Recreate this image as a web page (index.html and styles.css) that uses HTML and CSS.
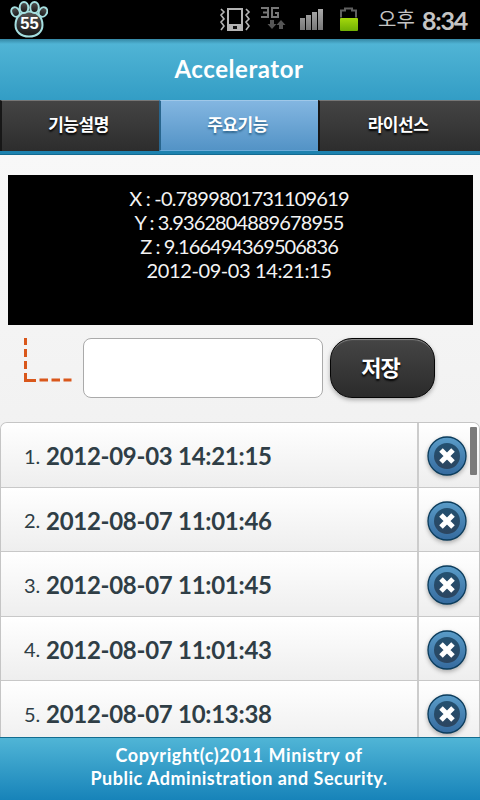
FILE: index.html
```html
<!DOCTYPE html>
<html lang="ko">
<head>
<meta charset="utf-8">
<title>Accelerator</title>
<link rel="stylesheet" href="styles.css">
</head>
<body>
<svg class="defs" width="0" height="0">
  <defs>
    <linearGradient id="disc" x1="0" y1="0" x2="0" y2="1"><stop offset="0" stop-color="#5a9cc8"/><stop offset="1" stop-color="#356a9e"/></linearGradient>
    <linearGradient id="core" x1="0" y1="0" x2="0" y2="1"><stop offset="0" stop-color="#235070"/><stop offset="1" stop-color="#2c4560"/></linearGradient>
    <linearGradient id="bars" x1="0" y1="0" x2="0" y2="1"><stop offset="0" stop-color="#aaa"/><stop offset="1" stop-color="#777"/></linearGradient>
    <linearGradient id="charge" x1="0" y1="0" x2="0" y2="1"><stop offset="0" stop-color="#a4d80c"/><stop offset="1" stop-color="#6fae04"/></linearGradient>
    <linearGradient id="pad" x1="0" y1="0" x2="0" y2="1"><stop offset="0" stop-color="#555"/><stop offset="1" stop-color="#151515"/></linearGradient>
    <g id="delete">
      <circle cx="20" cy="20" r="19" fill="url(#disc)" stroke="#0b3c5c" stroke-width="1.3"/>
      <circle cx="20" cy="20" r="13" fill="url(#core)"/>
      <path d="M14 14L26 26M26 14L14 26" stroke="#fff" stroke-width="5"/>
    </g>
  </defs>
</svg>
<div class="status">
  <svg class="paw" width="40" height="39" viewBox="0 0 40 39">
    <g fill="url(#pad)" stroke="#a5dfe0" stroke-width="2">
      <path d="M21 11.500C29 11.500 34.500 17 34.500 25C34.500 32 29 36.500 21 36.500C13 36.500 7.500 32 7.500 25C7.500 17 13 11.500 21 11.500Z"/>
      <ellipse cx="7.500" cy="12" rx="4" ry="5" transform="rotate(-28 7.500 12)"/>
      <ellipse cx="16" cy="7.500" rx="4.300" ry="5.500"/>
      <ellipse cx="26.500" cy="7.500" rx="4.300" ry="5.500"/>
      <ellipse cx="35" cy="12" rx="4" ry="5" transform="rotate(28 35 12)"/>
    </g>
    <text x="21.5" y="29" text-anchor="middle" class="count">55</text>
  </svg>
  <svg class="icons" width="142" height="39" viewBox="218 0 142 39">
    <g fill="none" stroke="#b4b4b4">
      <path d="M221 9l3 3-3 3 3 4-3 3 3 4-3 4M246 9l3 3-3 3 3 4-3 3 3 4-3 4" stroke-width="1.600"/>
      <rect x="228" y="9" width="14" height="21" stroke-width="2"/>
    </g>
    <path d="M228 24h14v6h-14z" fill="#b4b4b4"/>
    <path d="M233 26h4v3h-4z" fill="#111"/>
    <path d="M261 8h7v9h-7M263 12.500h5M279 8h-7v9h6v-4h-3" fill="none" stroke="#777" stroke-width="2"/>
    <path d="M270 20h4v4h2.500l-4.500 5-4.500-5h2.500zM279 29h4v-4h2.500l-4.500-5-4.500 5h2.500z" fill="#555"/>
    <path d="M300 18h5v12h-5zM306 15h5v15h-5zM312 12h5v18h-5zM318 9h5v21h-5z" fill="url(#bars)"/>
    <path d="M341 17.500v-7h4v-2h7v2h4v7" fill="none" stroke="#606060" stroke-width="2"/>
    <rect x="340" y="18" width="18" height="13" rx="1" fill="url(#charge)"/>
  </svg>
  <span class="ampm">오후</span><span class="clock">8:34</span>
</div>
<header class="title"><h1>Accelerator</h1></header>
<nav class="tabs">
  <a class="tab"><span>기능설명</span></a>
  <a class="tab active"><span>주요기능</span></a>
  <a class="tab"><span>라이선스</span></a>
</nav>
<main>
  <section class="readout">
    <p class="x">X : -0.7899801731109619</p>
    <p class="y">Y : 3.9362804889678955</p>
    <p class="z">Z : 9.166494369506836</p>
    <p class="date">2012-09-03 14:21:15</p>
  </section>
  <form class="entry">
    <svg class="elbow" width="83" height="60" viewBox="0 338 83 60"><path d="M25.500 337v8M25.500 349v8M25.500 361v8M25.500 373v7.500h10.500M39.500 380h8.500M51.500 380h8.500M63.500 380h8" fill="none" stroke="#d9571b" stroke-width="3"/></svg>
    <input class="field" type="text" aria-label="이름">
    <button class="save" type="button"><span>저장</span></button>
  </form>
  <ol class="list">
    <li><div class="entry-text"><span class="num">1.</span><b>2012-09-03 14:21:15</b></div><div class="action"><svg class="del" viewBox="0 0 40 40"><use href="#delete"/></svg></div></li>
    <li><div class="entry-text"><span class="num">2.</span><b>2012-08-07 11:01:46</b></div><div class="action"><svg class="del" viewBox="0 0 40 40"><use href="#delete"/></svg></div></li>
    <li><div class="entry-text"><span class="num">3.</span><b>2012-08-07 11:01:45</b></div><div class="action"><svg class="del" viewBox="0 0 40 40"><use href="#delete"/></svg></div></li>
    <li><div class="entry-text"><span class="num">4.</span><b>2012-08-07 11:01:43</b></div><div class="action"><svg class="del" viewBox="0 0 40 40"><use href="#delete"/></svg></div></li>
    <li><div class="entry-text"><span class="num">5.</span><b>2012-08-07 10:13:38</b></div><div class="action"><svg class="del" viewBox="0 0 40 40"><use href="#delete"/></svg></div></li>
  </ol>
</main>
<footer>
  <p class="f1">Copyright(c)2011 Ministry of</p>
  <p class="f2">Public Administration and Security.</p>
</footer>
</body>
</html>
```
FILE: styles.css
```css
* { box-sizing: border-box; }
body {
  margin: 0;
  width: 480px;
  height: 800px;
  overflow: hidden;
  display: flex;
  flex-direction: column;
  background: #f4f4f4;
  font-family: Lato, "Noto Sans CJK KR", sans-serif;
  font-variant-ligatures: none;
}
p, h1, ol { margin: 0; padding: 0; }
.defs { position: absolute; }

.status {
  height: 39px;
  flex: none;
  display: flex;
  align-items: center;
  background: #000;
  color: #c4c4c4;
  padding-left: 8px;
  white-space: nowrap;
}
.count { font: bold 16.5px "Liberation Sans", sans-serif; fill: #fff; }
.icons { margin-left: 170px; }
.ampm { width: 44px; margin-left: 18px; font-size: 20px; line-height: 39px; }
.clock { font-size: 25px; line-height: 38px; font-weight: bold; letter-spacing: -1.2px; }

.title {
  height: 61px;
  flex: none;
  background: linear-gradient(#3487a4 0, #50b4d5 5px, #339dc5 100%);
  color: #fff;
  text-align: center;
}
.title h1 { font-size: 24px; line-height: 59px; font-weight: bold; letter-spacing: .55px; padding-right: 2px; }

.tabs {
  height: 55px;
  flex: none;
  display: grid;
  grid-template-columns: 159px 159px 162px;
  background: #1d82af;
  border-bottom: 1px solid #146b91;
  padding-bottom: 3px;
}
.tab {
  background: linear-gradient(#444, #2d2d2d);
  border-top: 1px solid #777;
  border-left: 2px solid #171717;
  color: #fff;
  font-size: 17px;
  font-weight: bold;
  line-height: 47px;
  text-align: center;
  letter-spacing: -.5px;
  padding-right: 4px;
  text-shadow: 0 2px 2px #000;
}
.tab.active {
  background: linear-gradient(#83b6e1, #5393c6);
  border-top-color: #a0c8e9;
  border-left-color: #28658d;
  border-bottom: 1px solid #6cabd9;
  text-shadow: 0 2px 2px #31678f;
}

main { height: 582px; flex: none; display: flex; flex-direction: column; background: linear-gradient(#f8f8f8, #f1f1f1 300px); }
.readout {
  height: 150px;
  flex: none;
  margin: 20px 7px 0 8px;
  padding: 11px 3px 0 0;
  background: #000;
  color: #f3f3f3;
  text-align: center;
  font-size: 20px;
  line-height: 24px;
}
.x { letter-spacing: -.78px; }
.y { letter-spacing: -.9px; }
.z { letter-spacing: -.95px; }
.date { letter-spacing: -.4px; }

.entry { display: flex; height: 60px; flex: none; margin: 13px 0 24px; }
.field { width: 240px; height: 60px; margin: 0; border: 1px solid #aaa; border-radius: 8px; background: #fff; }
.save {
  width: 105px;
  height: 60px;
  margin: 0 0 0 7px;
  padding: 0 4px 0 0;
  border: 1px solid #050505;
  border-radius: 22px;
  background: linear-gradient(#454545, #2b2b2b);
  box-shadow: inset 0 2px 1px -1px #888, 0 2px 4px #aaa;
  color: #fff;
  font: bold 22px/58px Lato, "Noto Sans CJK KR", sans-serif;
  letter-spacing: -1px;
  text-shadow: 0 2px 2px #000;
}

.list {
  position: relative;
  height: 315px;
  flex: none;
  overflow: hidden;
  list-style: none;
  border: 1px solid #c5c5c5;
  border-bottom: 0;
  border-radius: 7px 7px 0 0;
}
.list::after {
  content: "";
  position: absolute;
  top: 4px;
  right: 2px;
  width: 7px;
  height: 48px;
  border-radius: 1px;
  background: #7b7b7b;
}
.list li { height: 64.5px; display: grid; grid-template-columns: 418px 1fr; border-bottom: 1px solid #c8c8c8; background: linear-gradient(#fff, #eee); }
.entry-text { display: flex; align-items: center; padding: 2px 0 0 23px; color: #2f3e46; border-right: 2px solid #ccc; white-space: nowrap; }
.num { width: 22px; font-size: 20px; }
.entry-text b { font-size: 24px; letter-spacing: -.28px; }
.action { display: flex; align-items: center; justify-content: center; padding: 3px 5px 0 0; }
.del { flex: none; width: 40px; height: 40px; filter: drop-shadow(0 2px 2px #aaa); }

footer {
  height: 63px;
  flex: none;
  border-top: 1px solid #126d90;
  background: linear-gradient(#50b5d6, #1783b9);
  color: #fff;
  text-align: center;
  font-size: 18px;
  font-weight: bold;
  line-height: 23px;
  padding: 6px 2px 0 0;
}
.f1 { letter-spacing: .6px; }
.f2 { letter-spacing: .5px; }
```
